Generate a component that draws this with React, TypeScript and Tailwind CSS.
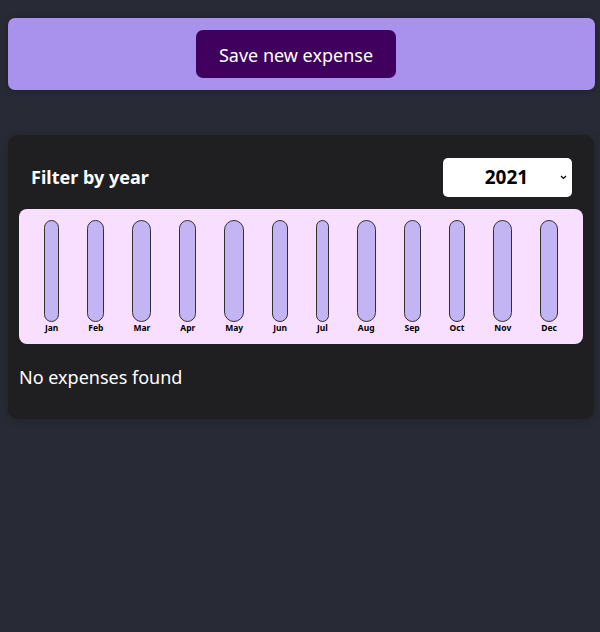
import React from "react"

const months = ["Jan", "Feb", "Mar", "Apr", "May", "Jun", "Jul", "Aug", "Sep", "Oct", "Nov", "Dec"]

const ChartBar: React.FC<{ label: string }> = ({ label }) => {
  return (
    <div className="h-full flex flex-col items-center">
      <div className="h-full w-full border border-[#313131] rounded-[12px] bg-[#c3b4f3] overflow-hidden"></div>
      <div className="font-bold text-[8.5px] leading-[10px] text-center text-black pt-[1px] px-[1px]">{label}</div>
    </div>
  )
}

const App: React.FC = () => {
  return (
    <div
      className="min-h-[632px] bg-[#282b35] pt-[18px] pb-4"
      style={{ fontFamily: '"Noto Sans", "Open Sans", sans-serif' }}
    >
      {/* new expense */}
      <div className="ml-2 mr-[5px] h-[72px] bg-[#a892ee] rounded-[7px] flex items-center justify-center pr-[11px] shadow-[0_1px_6px_rgba(0,0,0,0.25)]">
        <button className="w-[200px] h-[48px] bg-[#40005d] text-white text-[18px] leading-[26px] pt-[2px] rounded-[7px]">
          Save new expense
        </button>
      </div>

      {/* expenses */}
      <div className="ml-2 mr-[6px] mt-[45px] bg-[#1f1e21] rounded-[10px] p-[11px] shadow-[0_1px_8px_rgba(0,0,0,0.25)]">
        <div className="flex items-center justify-between pl-3 pr-[11px] mt-3 mb-3">
          <span className="text-white font-bold text-[18px]">Filter by year</span>
          <div className="relative w-[129px] h-[39px] bg-white rounded-[5px] flex items-center justify-center">
            <span className="font-bold text-[19px] text-black pr-[2px]">2021</span>
            <svg
              className="absolute right-[5px] top-[17px]"
              width="7"
              height="5"
              viewBox="0 0 7 5"
              fill="none"
              stroke="#000"
              strokeWidth="1.2"
            >
              <path d="M1 1l2.5 2.5L6 1" />
            </svg>
          </div>
        </div>
        <div className="h-[135px] bg-[#f8dfff] rounded-[8px] p-[11px] flex justify-around">
          {months.map((m) => (
            <ChartBar key={m} label={m} />
          ))}
        </div>
        <p className="text-white text-[18px] mt-[19px] mb-[17px] leading-[28px]">No expenses found</p>
      </div>
    </div>
  )
}

export default App
